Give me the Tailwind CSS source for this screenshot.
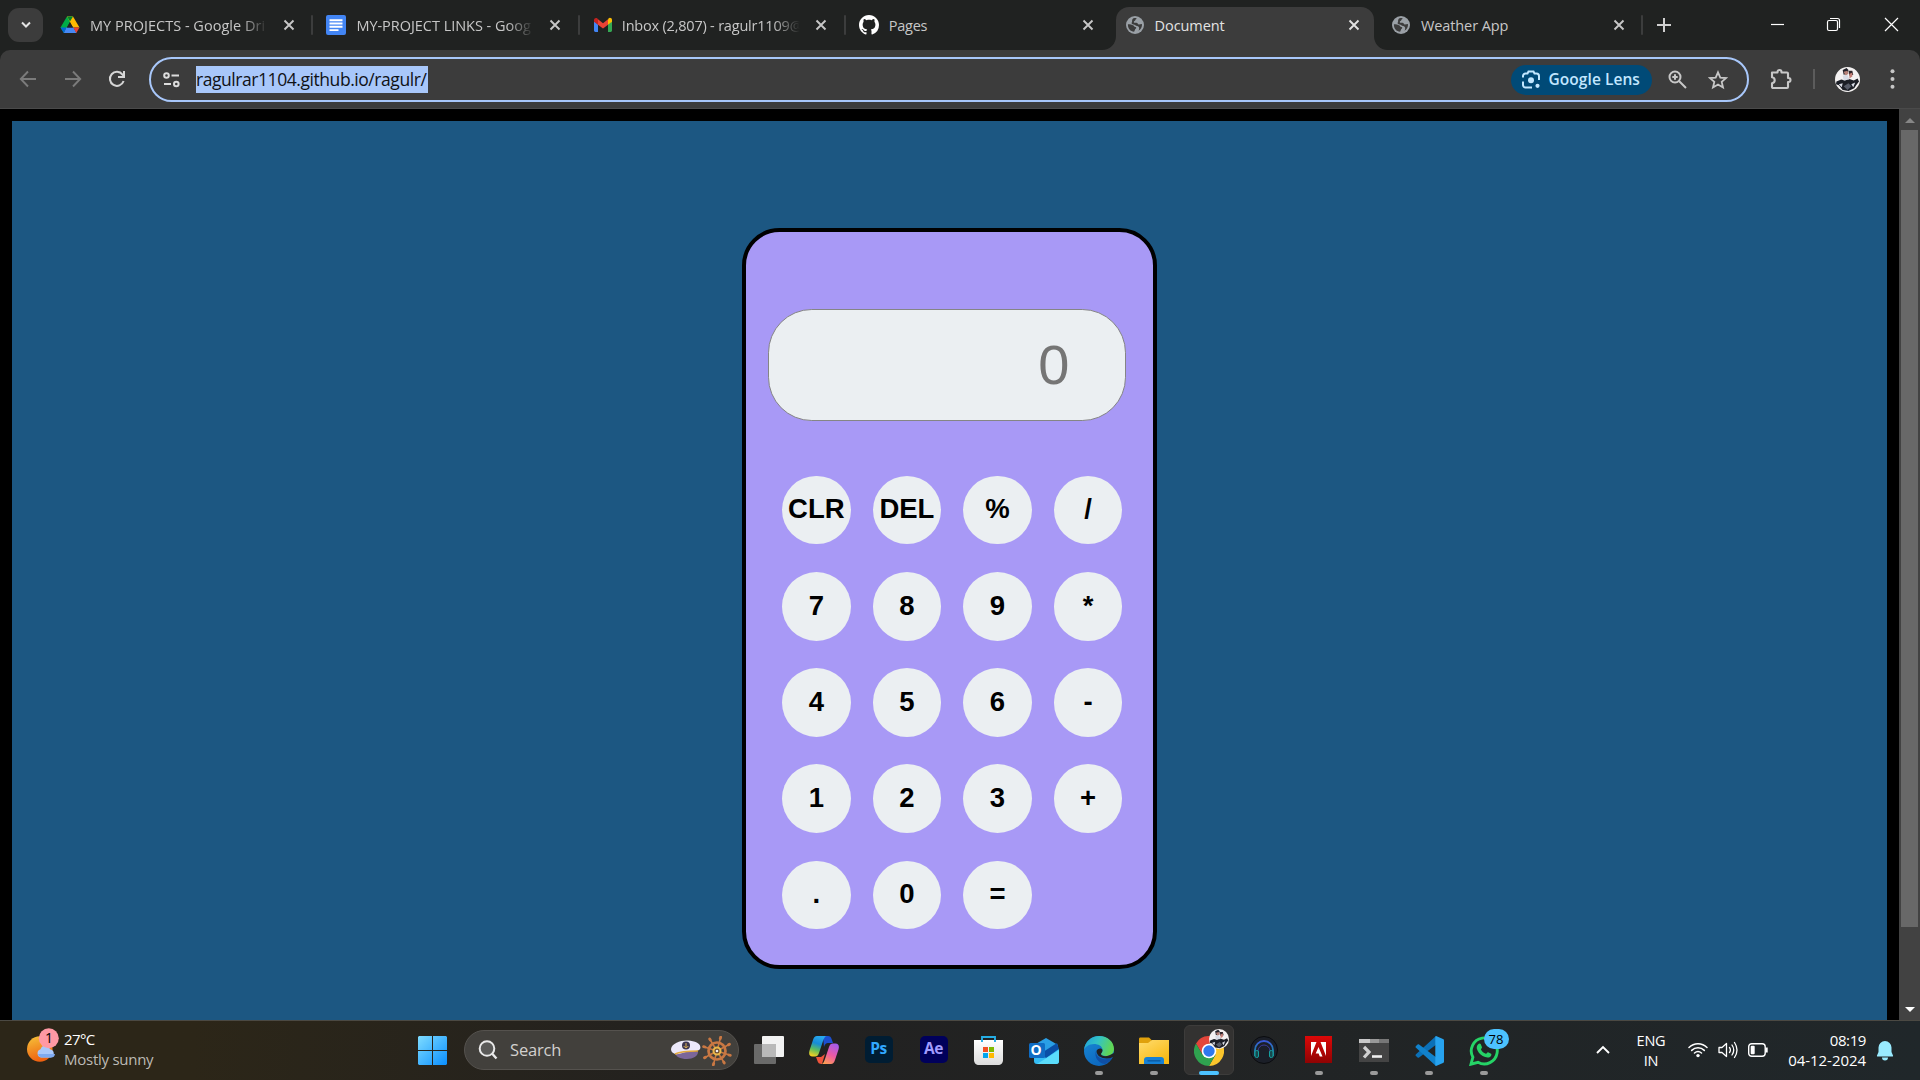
<!DOCTYPE html>
<html lang="en">
<head>
<meta charset="utf-8">
<title>Document</title>
<script src="https://cdn.jsdelivr.net/npm/@tailwindcss/browser@4"></script>
</head>
<body class="w-[1920px] h-[1080px] overflow-hidden bg-black flex flex-col font-['Open_Sans','Noto_Sans',sans-serif]">

<svg class="hidden">
  <symbol id="x" viewBox="0 0 12 12"><path d="M1.5 1.5l9 9M10.500 1.500l-9 9" stroke="currentColor" stroke-width="1.9" fill="none"/></symbol>
  <symbol id="globe" viewBox="0 0 18 18"><circle cx="9" cy="9" r="9" fill="#9aa0a6"/><path d="M1.9 8.300c2.200 0 4.100.3 5.600 1.200 1 .6.8 1.500 2 1.600.9.100 1 1.200.2 1.700-1 .6-.6 1.500-1.600 2.900C4.500 15.700 1.700 12.700 1.900 8.300zM7.400 2.200c2.100-.5 3.200-.2 3.200.3 0 .8-1.200.6-1.200 1.600s-1.600.9-1.600 1.900c0 1.100 1.500.8 2.600.8 1.400 0 1.200 1.700 2.500 1.700 1.100 0 1.900-.5 3-.4.5 3.400-1.500 5.600-3.500 6.700.7-1.300 1.100-2.900.4-3.900-.9-1.200-2.600-.6-3.500-1.600-.8-.9-2.700-.3-3.500-1.500-.6-1 .5-1.700.3-2.800-.1-.9.400-2.200 1.300-2.800z" fill="#3c3c3c"/></symbol>
  <symbol id="person" viewBox="0 0 26 26"><circle cx="13" cy="13" r="13" fill="#f4f2f2"/><path d="M1.500 15l5-2 4 1 3-2 6 2 4-2 1.500 3-3 4-2 3-6 3-6-1-4-5-3-1z" fill="#1b1e26"/><path d="M8 3l4-2 2 2-1 4-4 1z" fill="#22222a"/><path d="M9 5l4-1 1 3-3 2z" fill="#b78278"/><path d="M14 4l4 0 1 4-4 1z" fill="#30262b"/><path d="M15 7l3-1v4l-3 2z" fill="#c47f77"/><path d="M8 9l5-1 2 5-6 1zM4 18l4-1-1 4zM17 18l4-2-2 5z" fill="#d8dce6"/><path d="M9 20l5-3 3 3-4 4z" fill="#565b68"/></symbol>
</svg>

<!-- Tab strip -->
<header class="h-[50px] bg-[#202221] flex shrink-0 text-[#c7c7c7] text-[14.5px]">
  <div class="w-[50px] pl-2 pt-2 shrink-0">
    <div class="w-[35px] h-[34px] rounded-[11px] bg-[#3c3c3c] flex items-center justify-center">
      <svg class="w-3 h-3" viewBox="0 0 12 12"><path d="M2 3.500l4 4 4-4" fill="none" stroke="#e3e3e3" stroke-width="2"/></svg>
    </div>
  </div>
  <div class="w-[266.4px] shrink-0 flex items-center pl-[10px] pr-[3px]">
    <svg class="w-5 h-5 shrink-0" viewBox="0 0 20 20"><path d="M7 1.500h6L6.500 13 3.800 18 .5 12.500z" fill="#00ac47"/><path d="M7 1.500h6L19.500 12.500H13z" fill="#ffba00"/><path d="M13 1.500L10 6.600 7 1.500z" fill="#00832d"/><path d="M6.300 12.500h7.200l3 5.500H3.800z" fill="#4688f4"/><path d="M.5 12.500h5.900L3.800 18z" fill="#0066da"/><path d="M13.300 12.500h6.200L16.300 18z" fill="#ea4335"/><path d="M10 7.500l3 5H7z" fill="#202221"/></svg>
    <span class="ml-[10px] pt-px w-[178px] whitespace-nowrap tracking-[0.02px] mask-r-from-85%">MY PROJECTS - Google Dri</span>
    <svg class="ml-[14.500px] w-3 h-3 shrink-0"><use href="#x"/></svg>
    <i class="ml-auto w-[2px] h-5 bg-[#3c3d3d] rounded"></i>
  </div>
  <div class="w-[266.4px] shrink-0 flex items-center pl-[10px] pr-[3px]">
    <svg class="w-5 h-5 shrink-0" viewBox="0 0 20 20"><rect width="20" height="20" rx="2" fill="#4285f4"/><path d="M3.500 5.200h13M3.500 8.500h13M3.500 11.800h13M3.500 15.100h9" stroke="#fff" stroke-width="1.900"/></svg>
    <span class="ml-[10px] pt-px w-[178px] whitespace-nowrap tracking-[-0.03px] mask-r-from-85%">MY-PROJECT LINKS - Goog</span>
    <svg class="ml-[14.500px] w-3 h-3 shrink-0"><use href="#x"/></svg>
    <i class="ml-auto w-[2px] h-5 bg-[#3c3d3d] rounded"></i>
  </div>
  <div class="w-[266.4px] shrink-0 flex items-center pl-[10px] pr-[3px]">
    <svg class="w-5 h-5 shrink-0" viewBox="0 0 20 20"><path d="M1 6v9.500c0 .8.600 1.400 1.400 1.400H5V9.500z" fill="#4285f4"/><path d="M15 9.500v7.400h2.600c.8 0 1.400-.6 1.400-1.400V6z" fill="#34a853"/><path d="M15 4.500v5.200l4-3V5c0-2-2.200-2.800-3.500-1.600z" fill="#fbbc04"/><path d="M5 9.700V4.300l5 3.900 5-3.900v5.400l-5 3.800z" fill="#ea4335"/><path d="M1 5v1.700l4 3V4.300l-.6-.9C3 2.300 1 3.200 1 5z" fill="#c5221f"/></svg>
    <span class="ml-[9px] mr-px pt-px w-[178px] whitespace-nowrap tracking-[-0.200px] mask-r-from-85%">Inbox (2,807) - ragulr1109@</span>
    <svg class="ml-[14px] w-3 h-3 shrink-0"><use href="#x"/></svg>
    <i class="ml-auto w-[2px] h-5 bg-[#3c3d3d] rounded"></i>
  </div>
  <div class="w-[266.4px] shrink-0 flex items-center pl-[10px] pr-[3px]">
    <svg class="w-5 h-5 shrink-0" viewBox="0 0 16 16"><path fill="#fff" d="M8 0C3.580 0 0 3.580 0 8c0 3.540 2.290 6.530 5.470 7.590.4.070.55-.17.55-.38 0-.19-.01-.82-.01-1.490-2.010.37-2.530-.49-2.690-.94-.09-.23-.48-.94-.82-1.130-.28-.15-.68-.52-.01-.53.63-.01 1.080.58 1.230.82.720 1.210 1.870.87 2.330.66.070-.52.280-.87.510-1.070-1.780-.2-3.640-.89-3.640-3.950 0-.87.310-1.590.820-2.150-.08-.2-.36-1.020.080-2.120 0 0 .67-.21 2.200.82.640-.18 1.320-.27 2-.27s1.360.09 2 .27c1.530-1.040 2.200-.82 2.200-.82.440 1.100.160 1.920.080 2.120.510.560.820 1.270.820 2.150 0 3.070-1.870 3.750-3.650 3.950.290.250.540.730.540 1.480 0 1.070-.01 1.930-.01 2.200 0 .21.150.46.550.38A8.010 8.010 0 0 0 16 8c0-4.420-3.580-8-8-8z"/></svg>
    <span class="ml-[9.500px] pt-px w-[178px] whitespace-nowrap tracking-[-0.22px]">Pages</span>
    <svg class="ml-[15px] w-3 h-3 shrink-0"><use href="#x"/></svg>
  </div>
  <div class="relative w-[258.400px] mr-2 mt-[7px] pb-[7px] shrink-0 flex items-center pl-[10px] bg-[#3c3c3c] rounded-t-[13px] text-[#e3e3e3]">
    <svg class="absolute bottom-0 -left-[14px] w-[14px] h-[14px]" viewBox="0 0 14 14"><path d="M14 0v14H0C8 14 14 8 14 0z" fill="#3c3c3c"/></svg>
    <svg class="absolute bottom-0 -right-[14px] w-[14px] h-[14px]" viewBox="0 0 14 14"><path d="M0 0v14h14C6 14 0 8 0 0z" fill="#3c3c3c"/></svg>
    <svg class="w-[18px] h-[18px] shrink-0"><use href="#globe"/></svg>
    <span class="ml-[11px] mr-px pt-px w-[178px] tracking-[-0.080px]">Document</span>
    <svg class="ml-[14px] w-3 h-3 shrink-0"><use href="#x"/></svg>
  </div>
  <div class="w-[266.400px] shrink-0 flex items-center pl-[10px] pr-[5px]">
    <svg class="w-[18px] h-[18px] shrink-0"><use href="#globe"/></svg>
    <span class="ml-[11px] pt-px w-[178px] tracking-[-0.1px]">Weather App</span>
    <svg class="ml-[14px] w-3 h-3 shrink-0"><use href="#x"/></svg>
    <i class="ml-auto w-[2px] h-5 bg-[#3c3d3d] rounded"></i>
  </div>
  <svg class="ml-[8.500px] mt-[18px] w-[14px] h-[14px] shrink-0" viewBox="0 0 14 14"><path d="M7 0v14M0 7h14" stroke="#d0d0d0" stroke-width="2"/></svg>
  <svg class="ml-auto mt-[17px] mr-[41px] w-[15px] h-[15px] shrink-0" viewBox="0 0 15 15"><path d="M1 7.500h13" stroke="#fff" stroke-width="1.200"/></svg>
  <svg class="mt-[17px] mr-[43px] w-[15px] h-[15px] shrink-0" viewBox="0 0 15 15"><rect x="1.500" y="3.500" width="10" height="10" rx="1.500" fill="none" stroke="#fff" stroke-width="1.200"/><path d="M4 1.500h7.500a2 2 0 0 1 2 2V11" fill="none" stroke="#fff" stroke-width="1.200"/></svg>
  <svg class="mt-[17px] mr-[21px] w-[15px] h-[15px] shrink-0" viewBox="0 0 15 15"><path d="M1 1l13 13M14 1L1 14" stroke="#fff" stroke-width="1.200"/></svg>
</header>

<!-- Toolbar -->
<div class="h-[59px] shrink-0 bg-[#202221]">
<nav class="h-full bg-[#3c3c3c] rounded-t-[10px] border-b border-[#4a4a4a] flex pt-[7px] items-start">
  <div class="w-[149px] h-[44px] shrink-0 flex items-center pl-[19px] gap-[26.500px]">
    <svg class="w-[18px] h-[18px]" viewBox="0 0 18 18"><path d="M17 9H2M9 1.500L1.800 9 9 16.500" fill="none" stroke="#7b7b7b" stroke-width="1.900"/></svg>
    <svg class="w-[18px] h-[18px]" viewBox="0 0 18 18"><path d="M1 9h15M9 1.500L16.200 9 9 16.500" fill="none" stroke="#7b7b7b" stroke-width="1.900"/></svg>
    <svg class="w-[18px] h-[18px]" viewBox="0 0 18 18"><path d="M15.600 11A7 7 0 1 1 14.500 4.600L16 6.300" fill="none" stroke="#d6d6d6" stroke-width="2"/><path d="M16 1v6h-6" fill="none" stroke="#d6d6d6" stroke-width="2"/></svg>
  </div>
  <div class="w-[1600px] h-[45px] shrink-0 rounded-full border-[2.500px] border-[#a8c7fa] flex items-center pl-[12px] pr-[19px]">
    <svg class="w-[17px] h-[16px]" viewBox="0 0 17 16"><g fill="none" stroke="#dcdcdc" stroke-width="2"><circle cx="3.500" cy="3.500" r="2.300"/><path d="M8.500 3.500H16M1 12h7"/><circle cx="13.300" cy="12" r="2.300"/></g></svg>
    <span class="ml-[16px] h-[27px] w-[232px] bg-[#a8c7fa] text-[#101216] text-[17.500px] leading-[27px] tracking-[-0.440px] whitespace-nowrap">ragulrar1104.github.io/ragulr/</span>
    <div class="ml-auto w-[141px] h-[30px] rounded-full bg-[#004a77] text-[#c2e7ff] flex items-center pl-[11px]">
      <svg class="w-[18px] h-[19px]" viewBox="0 0 18 19"><g fill="none" stroke="#c2e7ff" stroke-width="2"><path d="M1 7.500V6a2.500 2.500 0 0 1 2.500-2.500h2L6.500 1.500h5l1 2h2A2.500 2.500 0 0 1 17 6v4M1 11.500V15a2.500 2.500 0 0 0 2.500 2.500H10"/></g><circle cx="9" cy="10.300" r="3" fill="#c2e7ff"/><circle cx="15.500" cy="15.800" r="2.100" fill="#c2e7ff"/></svg>
      <span class="ml-[8.500px] pt-px text-[15.500px] font-semibold tracking-[0.060px] whitespace-nowrap">Google Lens</span>
    </div>
    <svg class="ml-[16px] w-[19px] h-[19px]" viewBox="0 0 19 19"><g fill="none" stroke="#c7c7c7" stroke-width="2"><circle cx="7" cy="7" r="5.500"/><path d="M11 11l7 7M7 4.300v5.400M4.300 7h5.400"/></g></svg>
    <svg class="ml-[21px] w-[20px] h-[20px]" viewBox="0 0 20 20"><path d="M10 2.300l2.300 5.300 5.700.5-4.300 3.800 1.300 5.600-5-3-5 3 1.300-5.600L2 8.100l5.700-.5z" fill="none" stroke="#c7c7c7" stroke-width="1.800"/></svg>
  </div>
  <div class="h-[44px] flex-1 flex items-center">
    <svg class="ml-[21px] w-[22px] h-[22px]" viewBox="0 0 22 22"><path d="M2 4.500h5.500V4a2 2 0 0 1 4 0v.5H17a1 1 0 0 1 1 1v4.500h.5a2 2 0 0 1 0 4H18v5a1 1 0 0 1-1 1H3a1 1 0 0 1-1-1v-3.800c3.600-.5 3.600-5.400 0-5.900z" fill="none" stroke="#c7c7c7" stroke-width="2.100" stroke-linejoin="round"/></svg>
    <i class="ml-[21px] w-[2px] h-5 bg-[#5c5c5c]"></i>
    <svg class="ml-[20px] w-[25px] h-[25px]"><use href="#person"/></svg>
    <svg class="ml-[30px] w-[5px] h-[20px]" viewBox="0 0 5 20"><g fill="#c7c7c7"><circle cx="2.500" cy="2.300" r="2"/><circle cx="2.500" cy="10" r="2"/><circle cx="2.500" cy="17.700" r="2"/></g></svg>
  </div>
</nav>
</div>

<!-- Page -->
<main class="h-[911px] shrink-0 flex">
  <div class="w-[1899px] bg-black pt-3 px-3">
    <div class="h-full bg-[#1c5782] pt-[107px] pl-[730px] font-['Liberation_Sans',Arial,sans-serif]">
      <section class="w-[415px] h-[741px] rounded-[37.500px] border-4 border-black bg-[#a899f6] pt-[77px] px-[22px]">
        <div class="w-[358px] h-[112px] rounded-[43.750px] border border-[#858585] bg-[#ebeff2] flex items-center justify-end pr-[55.500px] text-[56px] text-[#757575] leading-none"><span>0</span></div>
        <div class="mt-[54.600px] ml-[14px] grid grid-cols-[repeat(4,68.750px)] auto-rows-[68.750px] gap-x-[21.800px] gap-y-[27.500px] text-[27.500px] font-bold text-black *:rounded-full *:bg-[#ebeff2] *:pb-[2px]">
          <button>CLR</button><button>DEL</button><button>%</button><button>/</button>
          <button>7</button><button>8</button><button>9</button><button>*</button>
          <button>4</button><button>5</button><button>6</button><button>-</button>
          <button>1</button><button>2</button><button>3</button><button>+</button>
          <button>.</button><button>0</button><button>=</button>
        </div>
      </section>
    </div>
  </div>
  <aside class="w-[21px] bg-[#424242] flex flex-col items-center">
    <svg class="mt-[9px] w-[10px] h-[5px]" viewBox="0 0 10 5"><path d="M5 0l5 5H0z" fill="#868686"/></svg>
    <div class="mt-[7px] w-[17px] h-[797px] bg-[#686868]"></div>
    <svg class="mt-auto mb-[8px] w-[10px] h-[5px]" viewBox="0 0 10 5"><path d="M5 5l5-5H0z" fill="#fff"/></svg>
  </aside>
</main>

<!-- Taskbar -->
<footer class="h-[60px] shrink-0 border-t border-[#4b4943] bg-linear-to-r from-[#2c2618] from-10% via-[#222120] via-38% to-[#20272a] flex text-white">
  <div class="w-[418px] shrink-0 flex pl-[27px]">
    <div class="relative w-[37px]">
      <svg class="absolute top-[7px] left-0 w-[32px] h-[35px]" viewBox="0 0 32 35"><defs><linearGradient id="sun" x2=".3" y2="1"><stop stop-color="#f6c43a"/><stop offset="1" stop-color="#ef6210"/></linearGradient></defs><circle cx="12.800" cy="21" r="12.800" fill="url(#sun)"/><path d="M14 29.500a4.300 4.300 0 0 1-.5-8.300 5 5 0 0 1 9.500 0 4.300 4.300 0 0 1 1 8.300z" fill="#a9c8fb"/><path d="M11 26h17a4 4 0 0 1-4 3.500H14a4 4 0 0 1-3-3.500z" fill="#7faaf0"/><circle cx="21.800" cy="10.300" r="10" fill="#ff99a4"/></svg>
      <span class="absolute left-[12px] top-[7px] w-5 text-center text-[14px] leading-5 text-black">1</span>
    </div>
    <div class="pt-[8px] text-[15px] leading-[20px] whitespace-nowrap"><p class="tracking-[-0.600px]">27°C</p><p class="tracking-[-0.260px] text-[#bdbab5]">Mostly sunny</p></div>
  </div>
  <svg class="mt-[15px] w-[29px] h-[29px] shrink-0" viewBox="0 0 29 29"><defs><linearGradient id="win" x2="1" y2="1"><stop stop-color="#7fdcff"/><stop offset="1" stop-color="#0a8fff"/></linearGradient></defs><path d="M1 0h13v14H0V1zM15 0h13l1 1v13H15zM0 15h14v14H1l-1-1zM15 15h14v13l-1 1H15z" fill="url(#win)"/></svg>
  <div class="ml-[17px] mt-[9px] w-[275px] h-[40px] shrink-0 rounded-full bg-[#42403c] border border-[#55524e] flex items-center pl-[13px] pr-[6px]">
    <svg class="w-[20px] h-[20px]" viewBox="0 0 20 20"><circle cx="9" cy="8.500" r="7.300" fill="#5a5a58" stroke="#e9e9e9" stroke-width="2"/><path d="M14 13.500l4.500 5" stroke="#e9e9e9" stroke-width="2.400"/></svg>
    <span class="ml-[12px] pt-px text-[16.500px] tracking-[-0.160px] text-[#d2d0ce]">Search</span>
    <svg class="ml-auto w-[30px] h-[20px]" viewBox="0 0 30 20"><path d="M4 11c0 6 5 8 12 8 6 0 11-3 11-7z" fill="#7b6699"/><path d="M0 9C1 3 10 0 17 .500 25 1 31 4 29 9c-2 3-8 2-14 3-5 1-8 3-11 2-3-1-4-3-4-5z" fill="#ece8fa"/><path d="M4 14c6-3 15-3 23-3" stroke="#e3a93d" stroke-width="1.500" fill="none"/><circle cx="15" cy="5.500" r="4" fill="#3c3450"/><path d="M15 3v5M12.700 6q2.300 3.500 4.600 0" stroke="#dcb052" fill="none"/></svg>
    <svg class="ml-[1px] mt-[2px] w-[30px] h-[30px]" viewBox="-15 -15 30 30"><g stroke="#c97843" stroke-linecap="round"><circle r="8.500" fill="none" stroke-width="2.700"/><path d="M3.500-13.200L-3.500 13.200M-7-11.500L7 11.500M-12.500-4L12.500 4M-12 6.500L12-6.500" stroke-width="1.600"/><path d="M3.300-12.500l.4-1.400M-6.700-11l-.6-1M-12-4l-1.400-.4M-11.500 6.200l-1 .6M12 4l1.300.4M11.500-6.200l1-.6M-3.300 12.500l-.4 1.400M6.700 11l.6 1" stroke-width="2.800"/></g><circle r="3.500" fill="#6a4932" stroke="#e9b84a" stroke-width="2"/><circle r="1.300" fill="#eee"/></svg>
  </div>

  <div class="ml-[2px] flex shrink-0 *:relative *:w-[55px] *:h-[59px] *:pt-[15px] *:flex *:justify-center *:items-start">
    <div><svg class="w-[30px] h-[29px]" viewBox="0 0 30 29"><rect x="8" y="0" width="22" height="21" rx="1" fill="#f2f2f2"/><rect x="0" y="8" width="22" height="20" rx="1" fill="#777" fill-opacity=".85"/><rect x="8" y="8" width="14" height="13" fill="#b9b9b9"/></svg></div>
    <div><svg class="w-[30px] h-[28px]" viewBox="0 0 30 28"><defs><linearGradient id="c1" x1=".5" x2=".2" y2="1"><stop stop-color="#28a8ee"/><stop offset=".35" stop-color="#168bd8"/><stop offset=".65" stop-color="#5bbd5f"/><stop offset="1" stop-color="#ffd21e"/></linearGradient><linearGradient id="c2" x1=".7" x2=".2" y2="1"><stop stop-color="#a75be8"/><stop offset=".5" stop-color="#ec5aa3"/><stop offset="1" stop-color="#ffa04e"/></linearGradient></defs><path d="M14 0h5c2 0 3 1 3.600 3L24 7h-5c-2 0-3 1-4 4z" fill="#1c4fd0"/><path d="M8 0h10c-2 0-3 2-4 5l-4 12c-.8 2.500-2 3.500-4 3.500H3.500C.5 20.500-.5 18 .5 14.500L4 4c.8-2.700 2-4 4-4z" fill="url(#c1)"/><path d="M7 21h5l4-3-3 10c-3 0-4-1-4.700-3.500z" fill="#f0543c"/><path d="M22 28H12c2 0 3-2 4-5l4-12c.8-2.500 2-3.500 4-3.500h2.500c3 0 4 2.500 3 6L26 24c-.8 2.700-2 4-4 4z" fill="url(#c2)"/></svg></div>
    <div><span class="w-[28px] h-[27px] rounded-[5px] bg-[#001d33] text-[#31a8ff] text-[15.500px] leading-[25px] font-bold text-center tracking-[-0.400px]">Ps</span></div>
    <div><span class="w-[28px] h-[27px] rounded-[5px] bg-[#00005b] text-[#a19cff] text-[15.500px] leading-[25px] font-bold text-center tracking-[-0.400px]">Ae</span></div>
    <div><svg class="w-[29px] h-[30px]" viewBox="0 0 29 30"><defs><linearGradient id="bag" x2="0" y2="1"><stop stop-color="#fff"/><stop offset="1" stop-color="#dcdcdc"/></linearGradient></defs><path d="M0 4h29v20c0 3-2 5-5 5H5c-3 0-5-2-5-5z" fill="url(#bag)"/><path d="M8 6V1h13v5" fill="none" stroke="#25aee5" stroke-width="1.900"/><path fill="#f25022" d="M9 11h5v5H9z"/><path fill="#7fba00" d="M15 11h5v5h-5z"/><path fill="#00a4ef" d="M9 17h5v5H9z"/><path fill="#ffb900" d="M15 17h5v5h-5z"/></svg></div>
    <div><svg class="mt-px w-[30px] h-[28px]" viewBox="0 0 30 28"><path d="M5 8l12-7 12 7v8L18 22 5 16z" fill="#2a9fe6"/><path d="M14 15L28 6l2 6-13 10z" fill="#0a4ea6"/><path d="M5 17l12 4 13-9v12c0 2-1 3-3 3H8c-2 0-3-1-3-3z" fill="#35bdf5"/><path d="M16 22l14-9v11c0 2-1 3-3 3H8z" fill="#5bdcfb"/><rect y="6" width="16" height="15" rx="1.500" fill="#0f6cc4"/></svg><span class="absolute left-[12px] top-[20px] w-4 text-center text-[14px] leading-[18px] font-bold">O</span></div>
    <div><svg class="w-[30px] h-[30px]" viewBox="0 0 30 30"><defs><linearGradient id="e1" x2="1" y2=".3"><stop stop-color="#1f9fdc"/><stop offset=".5" stop-color="#33c3c5"/><stop offset="1" stop-color="#60d655"/></linearGradient><linearGradient id="e2" x2=".6" y2="1"><stop stop-color="#1b8ad6"/><stop offset="1" stop-color="#0b66bd"/></linearGradient></defs><circle cx="15" cy="15" r="15" fill="url(#e2)"/><path d="M0 14C1 5 8 0 15 0c9 0 15 6 15 13 0 5-4 7-8 7-3 0-5-1-5-2 0-1 1.500-1.500 1.500-4C18.500 10 14 8 10 8 5 8 1 11 0 14z" fill="url(#e1)"/><path d="M12 15c-2 6 2 12 9 13 4-2 6-4 7.500-7-3 2-6 2.500-9 2-5-1-8-4-7.500-8z" fill="#0f4fa5"/><path d="M12.500 15c.8-3 5.500-3.500 6-1 .2 2-1.500 3-1.500 4 0 2 4 3 8 1.500l5-2.500v2.500c-.4 1-.9 1.500-1.500 1.800-7 3-16 0-16-6.300z" fill="#222120"/></svg><i class="absolute bottom-[5px] w-[8px] h-[4px] rounded-full bg-[#9a9a9a]"></i></div>
    <div><svg class="mt-px w-[30px] h-[28px]" viewBox="0 0 30 28"><defs><linearGradient id="fo" x2=".7" y2="1"><stop stop-color="#ffdc6e"/><stop offset="1" stop-color="#f8b912"/></linearGradient></defs><path d="M0 2c0-1 .5-1.500 1.500-1.500H10l3 3v5H0z" fill="#e0a10c"/><path d="M0 6h9l4-3h17v24H0z" fill="url(#fo)"/><path d="M5 27v-4a3 3 0 0 1 3-3h14a3 3 0 0 1 3 3v4z" fill="#1580d5"/><path d="M8.500 23.800h13" stroke="#0c5ca5" stroke-width="1.500"/></svg><i class="absolute bottom-[5px] w-[8px] h-[4px] rounded-full bg-[#9a9a9a]"></i></div>
    <div><i class="absolute top-[4px] left-[2.500px] w-[50px] h-[50px] rounded-[6px] bg-[#333231] border border-[#3d3c3b]"></i>
      <svg class="relative w-[30px] h-[30px]" viewBox="0 0 30 30"><path d="M2 7.500A15 15 0 0 1 28 7.500H15L8.500 18.800z" fill="#e2453a"/><path d="M28 7.500A15 15 0 0 1 15 30L21.500 18.800 15 7.500z" fill="#fcc62c"/><path d="M2 7.500A15 15 0 0 0 15 30L21.500 18.800H8.500z" fill="#2fa24f"/><circle cx="15" cy="15" r="7.300" fill="#fff"/><circle cx="15" cy="15" r="5.700" fill="#2f78ee"/></svg>
      <svg class="absolute top-[8px] left-[28px] w-[20px] h-[20px]"><use href="#person"/></svg>
      <i class="absolute bottom-[5px] w-[20px] h-[4px] rounded-full bg-[#4cc2ff]"></i></div>
    <div><svg class="w-[28px] h-[28px]" viewBox="0 0 28 28"><defs><linearGradient id="hp" x2="0" y2="1"><stop stop-color="#3a58d8"/><stop offset="1" stop-color="#129a9c"/></linearGradient></defs><circle cx="14" cy="14" r="13.500" fill="#1b1f28" stroke="#0b0c0f"/><path d="M5 20v-6a9 9 0 0 1 18 0v6" fill="none" stroke="url(#hp)" stroke-width="1.800"/><path d="M8 20v-5a6 6 0 0 1 12 0v5" fill="none" stroke="#3d3a98"/><rect x="5" y="14.500" width="3.500" height="7" rx="1.500" fill="#17494f" stroke="#16a09f"/><rect x="19.500" y="14.500" width="3.500" height="7" rx="1.500" fill="#17494f" stroke="#16a09f"/></svg></div>
    <div><svg class="w-[27px] h-[27px]" viewBox="0 0 27 27"><defs><linearGradient id="ad" x2="0" y2="1"><stop stop-color="#dd0808"/><stop offset="1" stop-color="#8f0303"/></linearGradient></defs><path fill="url(#ad)" d="M0 0h27v27H0z"/><path d="M6 6h5.500L6 20zM15.500 6H21v14zM13.500 11l4 9.500h-2.700l-1.200-3H10.700z" fill="#fff"/></svg><i class="absolute bottom-[5px] w-[8px] h-[4px] rounded-full bg-[#9a9a9a]"></i></div>
    <div><svg class="mt-[3px] w-[30px] h-[23px]" viewBox="0 0 30 23"><path fill="#444" d="M0 0h30v23H0z"/><path fill="#c9c9c9" d="M0 0h11v4H0z"/><path fill="#999" d="M11 0h9v4h-9z"/><path fill="#777" d="M20 0h10v4H20z"/><path d="M5 8l5 5-5 5.500" fill="none" stroke="#d0d0d0" stroke-width="3.200"/><path d="M13 17.500h10" stroke="#eee" stroke-width="2.600"/></svg><i class="absolute bottom-[5px] w-[8px] h-[4px] rounded-full bg-[#9a9a9a]"></i></div>
    <div><svg class="w-[30px] h-[30px]" viewBox="0 0 30 30"><path d="M22 0l-20 18.200c-.6.600-.6 1.300 0 1.900l1.600 1.400c.5.400 1 .4 1.500 0L23 8z" fill="#0b70b7"/><path d="M22 30L2 11.800c-.6-.6-.6-1.300 0-1.900l1.600-1.400c.5-.4 1-.4 1.500 0L23 22z" fill="#1182cc"/><path d="M22 0l7 3c.7.300 1 .8 1 1.500v21c0 .7-.3 1.200-1 1.500l-7 3c-.6-.3-.7-.8-.7-1.500v-27c0-.7.1-1.200.7-1.500z" fill="#27a3ef"/></svg><i class="absolute bottom-[5px] w-[8px] h-[4px] rounded-full bg-[#9a9a9a]"></i></div>
    <div><svg class="w-[30px] h-[30px]" viewBox="0 0 30 30"><path d="M2 28.200l1.900-7A13 13 0 1 1 9 26.300z" fill="none" stroke="#25d366" stroke-width="2.900"/><path d="M9 8.500c1-1.500 2.500-1 2.800-.3l1.200 3c.2.600-1.200 1.800-1 2.300 1 2.200 2.800 3.500 4.800 4.300.6.200 1.600-1.900 2.300-1.600l3 1.500c.7.400.2 2.300-.8 3-2 1.600-5 .8-7.600-.6-3-1.800-5.300-4.800-5.900-7.600-.2-1.500.2-3 1.200-4z" fill="#25d366"/></svg><span class="absolute left-[27.500px] top-[8px] w-[25px] h-[20px] rounded-full bg-[#4cc2ff] text-black text-[13px] leading-[20px] text-center">78</span><i class="absolute bottom-[5px] w-[8px] h-[4px] rounded-full bg-[#9a9a9a]"></i></div>
  </div>

  <div class="ml-auto flex shrink-0 pr-[26px]">
    <svg class="mt-[23px] w-[14px] h-[12px]" viewBox="0 0 14 12"><path d="M1 9l6-6 6 6" fill="none" stroke="#fff" stroke-width="1.900"/></svg>
    <div class="ml-[21px] mt-[10px] w-[40px] text-center text-[14.500px] leading-[20px] tracking-[-0.200px]">ENG<br>IN</div>
    <svg class="ml-[17px] mt-[20px] w-[20px] h-[17px]" viewBox="0 0 20 17"><g fill="none" stroke="#fff" stroke-width="1.500" stroke-linecap="round"><path d="M1 6.500a12.700 12.700 0 0 1 18 0M3.700 9.400a9 9 0 0 1 12.600 0M6.500 12a5.300 5.300 0 0 1 7 0"/></g><circle cx="10" cy="14.600" r="1.700" fill="#fff"/></svg>
    <svg class="ml-[10px] mt-[20px] w-[20px] h-[18px]" viewBox="0 0 20 18"><g fill="none" stroke="#fff" stroke-width="1.300" stroke-linejoin="round" stroke-linecap="round"><path d="M1 6.500h3L8.500 2.500v13L4 11.500H1z"/><path d="M11.500 6.500q1.800 2.500 0 5M14 4q3.500 5 0 10M16.500 1.500q5 7.500 0 15"/></g></svg>
    <svg class="ml-[10px] mt-[22px] w-[20px] h-[14px]" viewBox="0 0 20 14"><rect x=".7" y=".7" width="16.500" height="12.600" rx="3" fill="none" stroke="#fff" stroke-width="1.400"/><rect x="2.700" y="2.700" width="4" height="8.600" rx="1" fill="#fff"/><path d="M18.500 4.500v5" stroke="#fff" stroke-width="2.400"/></svg>
    <div class="ml-[14px] mt-[9px] w-[84px] text-right text-[15px] leading-[20px] whitespace-nowrap"><p class="tracking-[-0.400px]">08:19</p><p class="tracking-[-0.050px]">04-12-2024</p></div>
    <svg class="ml-[10px] mt-[19px] w-[18px] h-[21px]" viewBox="0 0 18 21"><path d="M9 1a6.500 6.500 0 0 1 6.500 6.500V12l1.500 3.500c.2.500 0 1-.6 1H1.600c-.6 0-.8-.5-.6-1L2.500 12V7.500A6.500 6.500 0 0 1 9 1zM6 17.500h6a3 3 0 0 1-6 0z" fill="#99ebff"/></svg>
  </div>
</footer>
</body>
</html>
